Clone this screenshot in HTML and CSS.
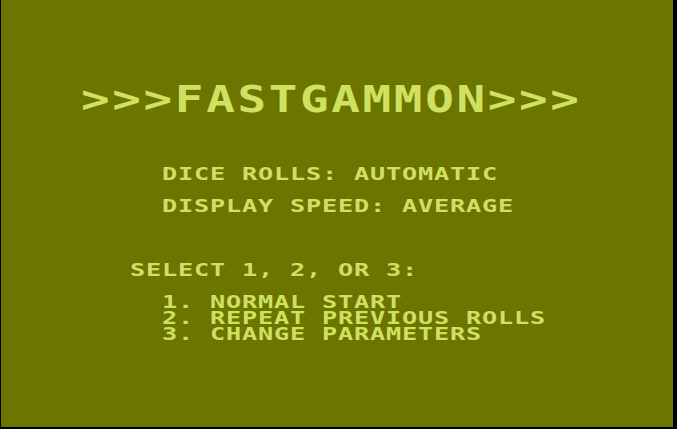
FILE: index.html
```html
<!DOCTYPE html>
<html lang="en">
  <head>
    <meta charset="UTF-8" />
    <meta name="viewport" content="width=device-width, initial-scale=1.0" />
    <title>Fastgammon</title>
    <link rel="stylesheet" href="styles.css">
  </head>
  <body>
    <!-- TITLE SCREEN -->
    <div class="screen">
      <div class="title">&gt;&gt;&gt;FASTGAMMON&gt;&gt;&gt;</div>

      <!-- current parameters -->
      <div class="settings">
        <div class="line">DICE ROLLS: AUTOMATIC</div>
        <div class="line gap">DISPLAY SPEED: AVERAGE</div>
      </div>

      <!-- menu -->
      <div class="prompt line">SELECT 1, 2, OR 3:</div>
      <ul class="menu">
        <li class="line">1. NORMAL START</li>
        <li class="line">2. REPEAT PREVIOUS ROLLS</li>
        <li class="line">3. CHANGE PARAMETERS</li>
      </ul>
    </div>
  </body>
</html>
```

FILE: styles.css
```css
* {
  box-sizing: border-box;
  margin: 0;
  padding: 0;
}

html,
body {
  height: 100%;
  background-color: #000;
  overflow: hidden;
}

.screen {
  width: 672px;
  height: 427px;
  margin-left: 1px;
  padding-top: 83px;
  background-color: #6b7500;
  color: #d0e060;
  font-family: "DejaVu Sans Mono", "Liberation Mono", monospace;
  font-weight: bold;
  overflow: hidden;
}

/* double width title row */
.title {
  width: max-content;
  margin-left: 80px;
  font-size: 38px;
  line-height: 32px;
  letter-spacing: 2.15px;
  white-space: pre;
  transform: scaleX(1.25);
  transform-origin: 0 0;
}

/* normal text rows: 16px character cells */
.line {
  width: max-content;
  font-size: 18px;
  line-height: 16px;
  letter-spacing: 0.59px;
  white-space: pre;
  transform: scaleX(1.4);
  transform-origin: 0 0;
}

.settings {
  margin-top: 51px;
  margin-left: 161px;
}

.settings .gap {
  margin-top: 16px;
}

.prompt {
  margin-top: 48px;
  margin-left: 129px;
}

.menu {
  list-style: none;
  margin-top: 16px;
  margin-left: 161px;
}
```
